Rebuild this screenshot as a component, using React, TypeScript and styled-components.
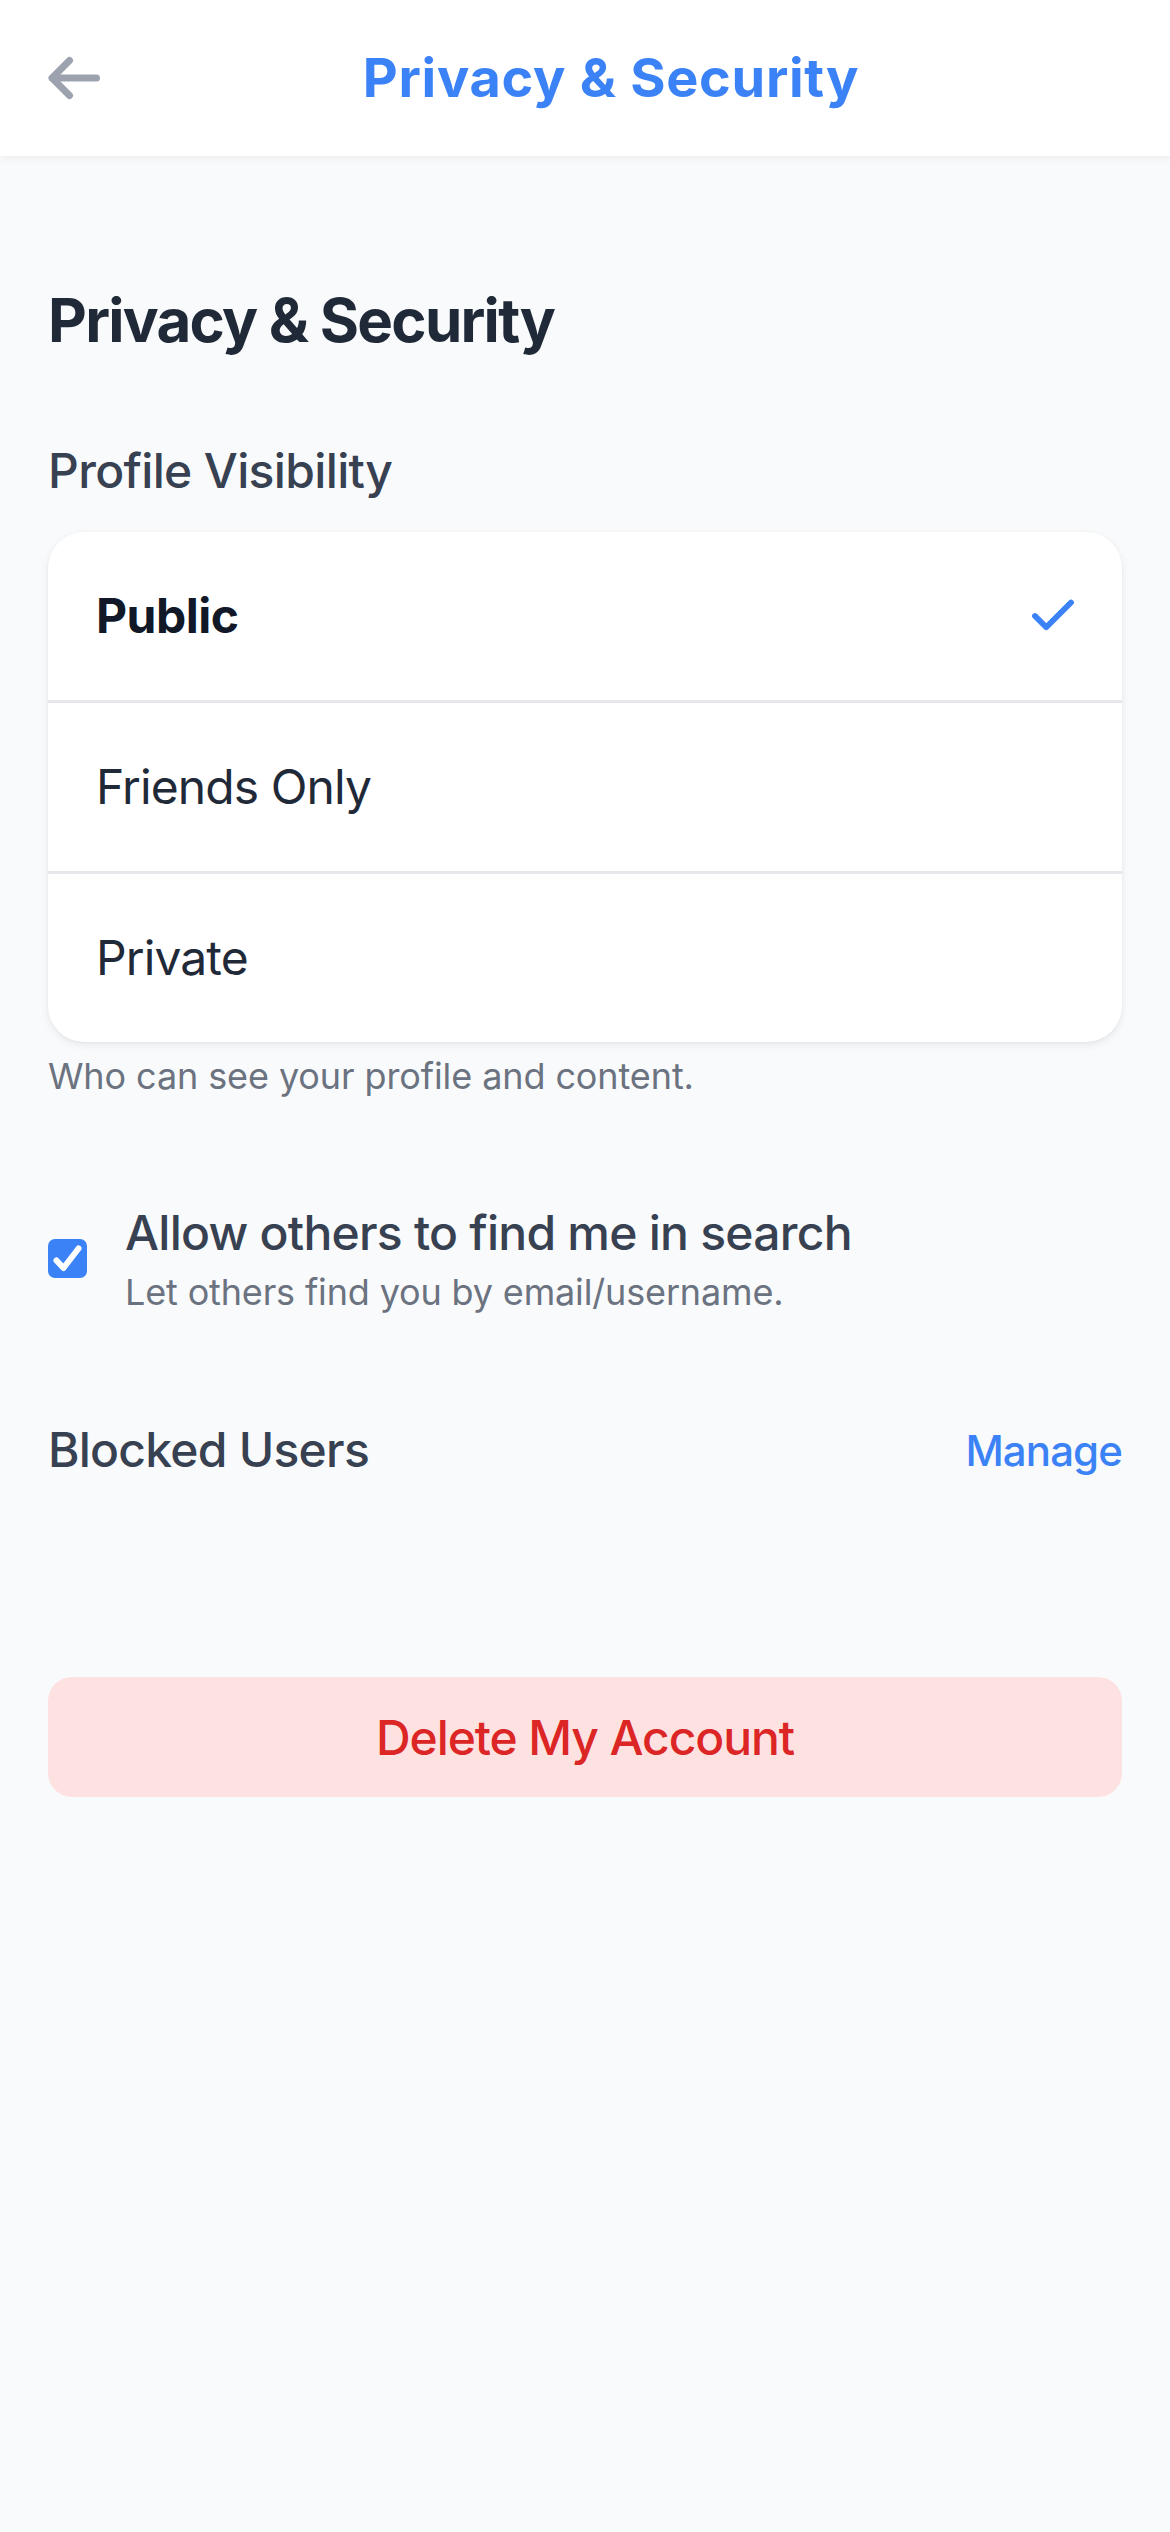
import React, { useState } from "react";
import styled, { createGlobalStyle } from "styled-components";
import { Check } from "lucide-react";

const GlobalStyle = createGlobalStyle`
  html, body {
    margin: 0;
    padding: 0;
    background: #f9fafb;
  }
  body {
    font-family: Inter, "Noto Sans", "Liberation Sans", sans-serif;
    -webkit-font-smoothing: antialiased;
  }
  * { box-sizing: border-box; }
`;

const Page = styled.div`
  min-height: 2532px;
  background: #f9fafb;
  display: flex;
  flex-direction: column;
`;

const TopBar = styled.header`
  height: 156px;
  background: #ffffff;
  display: flex;
  align-items: center;
  padding: 0 48px;
  box-shadow: 0 3px 8px rgba(0, 0, 0, 0.05);
  position: relative;
  z-index: 1;
`;

const BackButton = styled.button`
  width: 52px;
  height: 44px;
  padding: 0;
  border: none;
  background: transparent;
  display: flex;
  align-items: center;
  justify-content: center;
  cursor: pointer;
  color: #9ca3af;
`;

const TopTitle = styled.h1`
  flex: 1;
  margin: 0;
  text-align: center;
  font-size: 54px;
  line-height: 60px;
  font-weight: 700;
  color: #3b82f6;
  letter-spacing: 0.7px;
`;

const Content = styled.main`
  padding: 122px 48px 0;
  display: flex;
  flex-direction: column;
`;

const Heading = styled.h2`
  margin: 0;
  font-size: 60px;
  line-height: 84px;
  font-weight: 700;
  color: #1f2937;
  letter-spacing: -1.75px;
`;

const SectionLabel = styled.h3`
  margin: 73px 0 0;
  font-size: 48px;
  line-height: 72px;
  font-weight: 500;
  color: #374151;
  letter-spacing: -0.65px;
`;

const Card = styled.div`
  margin-top: 25px;
  background: #ffffff;
  border-radius: 36px;
  overflow: hidden;
  box-shadow: 0 3px 9px rgba(0, 0, 0, 0.07), 0 1px 3px rgba(0, 0, 0, 0.04);
`;

const OptionRow = styled.button<{ $first?: boolean }>`
  width: 100%;
  height: ${(p) => (p.$first ? "168px" : "171px")};
  border: none;
  border-top: ${(p) => (p.$first ? "none" : "3px solid #e5e7eb")};
  background: transparent;
  display: flex;
  align-items: center;
  justify-content: space-between;
  padding: 0 48px;
  font-family: inherit;
  cursor: pointer;
  text-align: left;
`;

const OptionText = styled.span<{ $active?: boolean }>`
  font-size: 48px;
  line-height: 72px;
  font-weight: ${(p) => (p.$active ? 700 : 400)};
  color: ${(p) => (p.$active ? "#111827" : "#1f2937")};
  letter-spacing: ${(p) => (p.$active ? "-0.5px" : "-0.9px")};
`;

const SelectedMark = styled(Check)`
  margin-right: -6px;
  margin-top: -1px;
`;

const Caption = styled.p`
  margin: 7px 0 0;
  font-size: 36px;
  line-height: 54px;
  color: #6b7280;
  letter-spacing: -0.1px;
`;

const CheckRow = styled.label`
  margin-top: 98px;
  display: flex;
  align-items: center;
  gap: 38px;
  cursor: pointer;
`;

const CheckBox = styled.span<{ $on: boolean }>`
  width: 39px;
  height: 39px;
  flex: none;
  border-radius: 7px;
  background: ${(p) => (p.$on ? "#3b82f6" : "#ffffff")};
  border: ${(p) => (p.$on ? "none" : "3px solid #9ca3af")};
  display: flex;
  align-items: center;
  justify-content: center;
`;

const CheckText = styled.span`
  display: flex;
  flex-direction: column;
`;

const CheckTitle = styled.span`
  font-size: 48px;
  line-height: 64px;
  font-weight: 500;
  color: #374151;
  letter-spacing: -0.75px;
`;

const CheckSub = styled.span`
  margin-top: 3px;
  font-size: 36px;
  line-height: 48px;
  color: #6b7280;
  letter-spacing: -0.15px;
`;

const LinkRow = styled.div`
  margin-top: 98px;
  display: flex;
  align-items: center;
  justify-content: space-between;
`;

const LinkLabel = styled.span`
  font-size: 48px;
  line-height: 72px;
  font-weight: 500;
  color: #374151;
  letter-spacing: -0.75px;
`;

const LinkButton = styled.button`
  border: none;
  background: transparent;
  padding: 0;
  font-family: inherit;
  font-size: 42px;
  line-height: 63px;
  font-weight: 500;
  color: #3b82f6;
  letter-spacing: -0.9px;
  cursor: pointer;
`;

const DangerButton = styled.button`
  margin-top: 191px;
  height: 120px;
  width: 100%;
  border: none;
  border-radius: 24px;
  background: #fee2e2;
  color: #dc2626;
  font-family: inherit;
  font-size: 48px;
  font-weight: 500;
  letter-spacing: -1.1px;
  cursor: pointer;
`;

const options = ["Public", "Friends Only", "Private"];

export default function App() {
  const [visibility, setVisibility] = useState("Public");
  const [searchable, setSearchable] = useState(true);

  return (
    <>
      <GlobalStyle />
      <Page>
        <TopBar>
          <BackButton aria-label="Back">
            <svg width="52" height="44" viewBox="0 0 52 44" fill="none">
              <path
                d="M21.5 4.5 L4 22 L21.5 39.5 M4 22 H48.5"
                stroke="currentColor"
                strokeWidth="7"
                strokeLinecap="round"
                strokeLinejoin="round"
              />
            </svg>
          </BackButton>
          <TopTitle>Privacy &amp; Security</TopTitle>
        </TopBar>
        <Content>
          <Heading>Privacy &amp; Security</Heading>
          <SectionLabel>Profile Visibility</SectionLabel>
          <Card>
            {options.map((o, i) => (
              <OptionRow key={o} $first={i === 0} onClick={() => setVisibility(o)}>
                <OptionText $active={visibility === o}>{o}</OptionText>
                {visibility === o && <SelectedMark size={54} color="#3b82f6" strokeWidth={2.6} />}
              </OptionRow>
            ))}
          </Card>
          <Caption>Who can see your profile and content.</Caption>
          <CheckRow onClick={() => setSearchable((s) => !s)}>
            <CheckBox $on={searchable} role="checkbox" aria-checked={searchable}>
              {searchable && (
                <svg width="39" height="39" viewBox="0 0 39 39" fill="none">
                  <path
                    d="M8.5 21.5 L15.5 29 L30.5 9.5"
                    stroke="#ffffff"
                    strokeWidth="6"
                    strokeLinecap="round"
                    strokeLinejoin="round"
                  />
                </svg>
              )}
            </CheckBox>
            <CheckText>
              <CheckTitle>Allow others to find me in search</CheckTitle>
              <CheckSub>Let others find you by email/username.</CheckSub>
            </CheckText>
          </CheckRow>
          <LinkRow>
            <LinkLabel>Blocked Users</LinkLabel>
            <LinkButton>Manage</LinkButton>
          </LinkRow>
          <DangerButton>Delete My Account</DangerButton>
        </Content>
      </Page>
    </>
  );
}
